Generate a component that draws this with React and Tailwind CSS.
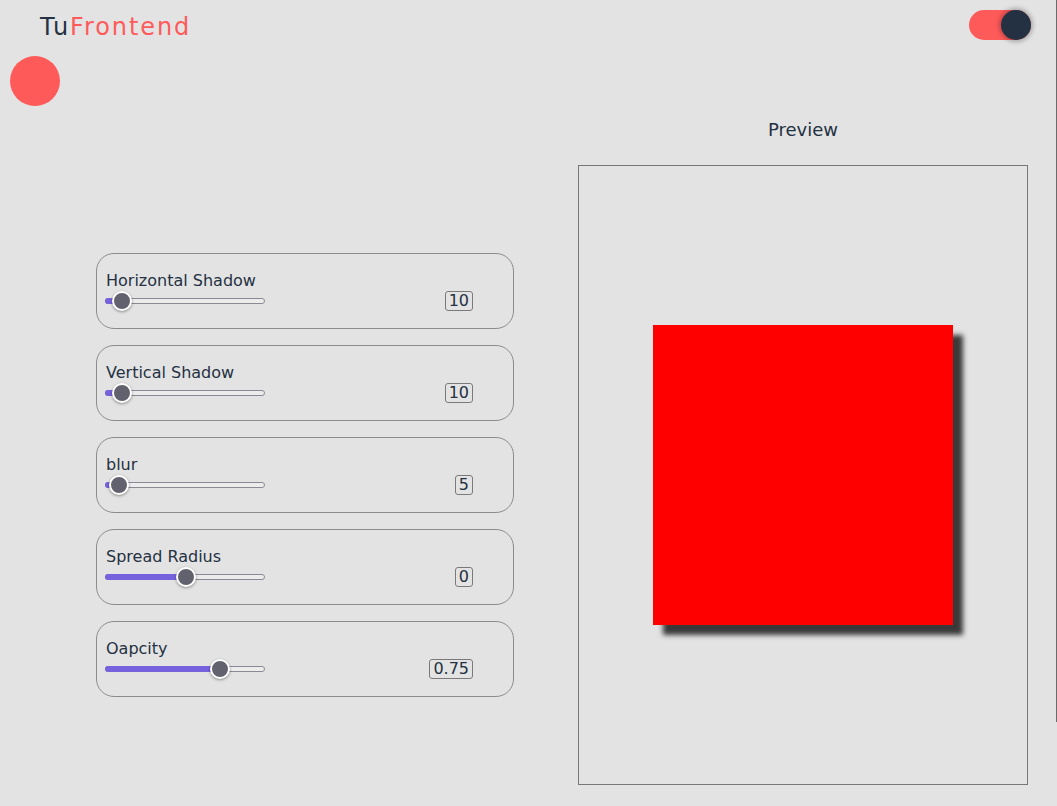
import { useState } from 'react';

const controls = [
  { label: 'Horizontal Shadow', value: '10', pct: 4 },
  { label: 'Vertical Shadow', value: '10', pct: 4 },
  { label: 'blur', value: '5', pct: 2 },
  { label: 'Spread Radius', value: '0', pct: 50 },
  { label: 'Oapcity', value: '0.75', pct: 74 },
];

function Slider({ pct }) {
  // thumb travels between 11px and 151px of a 160px track
  const x = 11 + (140 * pct) / 100;
  return (
    <div className="relative w-[160px] h-[20px]">
      <div className="absolute left-0 right-0 top-[7px] h-[6px] rounded-full border border-[#8a8a94] bg-[#ececec]" />
      <div className="absolute left-0 top-[7px] h-[6px] rounded-full bg-[#7662dc]" style={{ width: x }} />
      <div
        className="absolute top-0 w-[20px] h-[20px] rounded-full bg-[#62616e] border-2 border-white shadow-[0_1px_3px_rgba(0,0,0,0.4)]"
        style={{ left: x - 10 }}
      />
    </div>
  );
}

function Control({ label, value, pct }) {
  return (
    <div className="h-[76px] rounded-[18px] border border-[#8c8c8c] pl-[8px] pr-[40px] pt-[17px]">
      <p className="pl-[1px] text-[16px] leading-[20px] text-[#243142]">{label}</p>
      <div className="flex items-center justify-between">
        <Slider pct={pct} />
        <span className="border border-[#7a7a7a] rounded-[3px] px-[3px] text-[16px] leading-[18px] text-[#243142]">
          {value}
        </span>
      </div>
    </div>
  );
}

export default function App() {
  const [dark, setDark] = useState(true);

  return (
    <div className="min-h-screen bg-[#e3e3e3] text-[#243142]" style={{ fontFamily: '"DejaVu Sans", "Noto Sans", sans-serif' }}>
      <div className="h-[722px] border-r border-[#6b6b6b]">
        <header className="flex items-start justify-between pl-[40px] pr-[25px] pt-[10px]">
          <h1 className="pt-[2px] text-[24px] leading-[30px] tracking-[1.9px]">
            <span className="text-[#243142]">Tu</span>
            <span className="text-[#ff5a5a]">Frontend</span>
          </h1>
          <button
            onClick={() => setDark(!dark)}
            className="relative w-[62px] h-[30px] rounded-full bg-[#ff5a5a]"
          >
            <span className="absolute right-0 top-0 w-[30px] h-[30px] rounded-full bg-[#243142] shadow-[0_0_4px_2px_rgba(0,0,0,0.25)]" />
          </button>
        </header>

        <div className="ml-[10px] mt-[14px] w-[50px] h-[50px] rounded-full bg-[#ff5a5a]" />

        <main className="flex mt-[9px]">
          <section className="ml-[96px] mt-[138px] w-[418px] flex flex-col gap-[16px]">
            {controls.map((c) => (
              <Control key={c.label} {...c} />
            ))}
          </section>

          <section className="ml-[64px] w-[450px]">
            <h2 className="pt-[1px] text-center text-[18px] leading-[28px] text-[#243142]">Preview</h2>
            <div className="mt-[21px] h-[620px] border border-[#777] flex items-center justify-center">
              <div className="w-[300px] h-[300px] bg-[#ff0000] shadow-[10px_10px_5px_0_rgba(0,0,0,0.75)]" />
            </div>
          </section>
        </main>
      </div>
    </div>
  );
}
